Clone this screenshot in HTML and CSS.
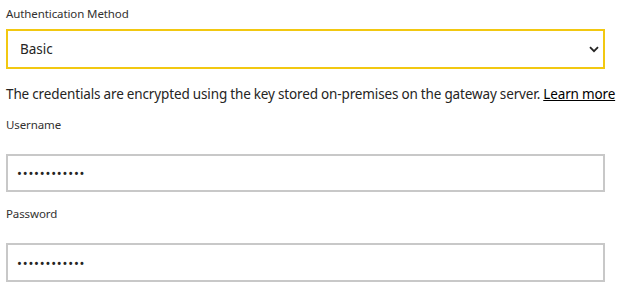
FILE: index.html
```html
<!DOCTYPE html>
<html lang="en">
<head>
<meta charset="utf-8">
<title>Gateway credentials</title>
<link rel="stylesheet" href="styles.css">
</head>
<body>
<form class="form">
  <label class="label label-first" for="auth">Authentication Method</label>
  <div class="select-wrap">
    <select id="auth" class="select">
      <option>Basic</option>
      <option>Windows</option>
    </select>
    <svg class="chevron" width="10" height="7" viewBox="0 0 10 7" aria-hidden="true">
      <path d="M1 1.2 L5 5.2 L9 1.2" fill="none" stroke="#252423" stroke-width="1.8"/>
    </svg>
  </div>
  <p class="note">The credentials are encrypted using the key stored on-premises on the gateway server. <a href="#" class="link">Learn more</a></p>
  <label class="label label-user" for="user">Username</label>
  <input id="user" class="input input-user" type="password" value="............">
  <label class="label label-pass" for="pass">Password</label>
  <input id="pass" class="input input-pass" type="password" value="............">
</form>
</body>
</html>
```
FILE: styles.css
```css
html, body {
  margin: 0;
  padding: 0;
  background: #ffffff;
}
body {
  font-family: "Noto Sans", "Open Sans", sans-serif;
  color: #252423;
}
.form {
  display: flex;
  flex-direction: column;
  width: 599px;
  margin-left: 6px;
}
.label {
  font-size: 11.5px;
  line-height: 16px;
  color: #323130;
  letter-spacing: -0.1px;
}
.label-first { margin-top: 6px; }
.label-user { margin-top: 13px; }
.label-pass { margin-top: 14px; }
.select-wrap {
  position: relative;
  margin-top: 7px;
}
.select {
  appearance: none;
  -webkit-appearance: none;
  display: block;
  width: 599px;
  height: 40px;
  box-sizing: border-box;
  border: 2px solid #f2c811;
  border-radius: 0;
  background: #ffffff;
  padding: 0 0 0 12px;
  font-family: inherit;
  font-size: 13.5px;
  color: #252423;
  outline: none;
}
.chevron {
  position: absolute;
  right: 6px;
  top: 17px;
}
.note {
  margin: 15px 0 0 0;
  font-size: 13.5px;
  line-height: 20px;
  letter-spacing: -0.12px;
  word-spacing: -0.3px;
  white-space: nowrap;
  color: #252423;
}
.link {
  color: #000000;
  text-decoration: underline;
}
.input {
  display: block;
  width: 599px;
  height: 38px;
  box-sizing: border-box;
  margin-top: 21px;
  border: 2px solid #c8c8c8;
  border-radius: 0;
  padding: 0 0 0 9px;
  font-family: inherit;
  font-size: 13px;
  color: #252423;
  letter-spacing: 0.8px;
  outline: none;
}
.input-pass { height: 39px; }
```
